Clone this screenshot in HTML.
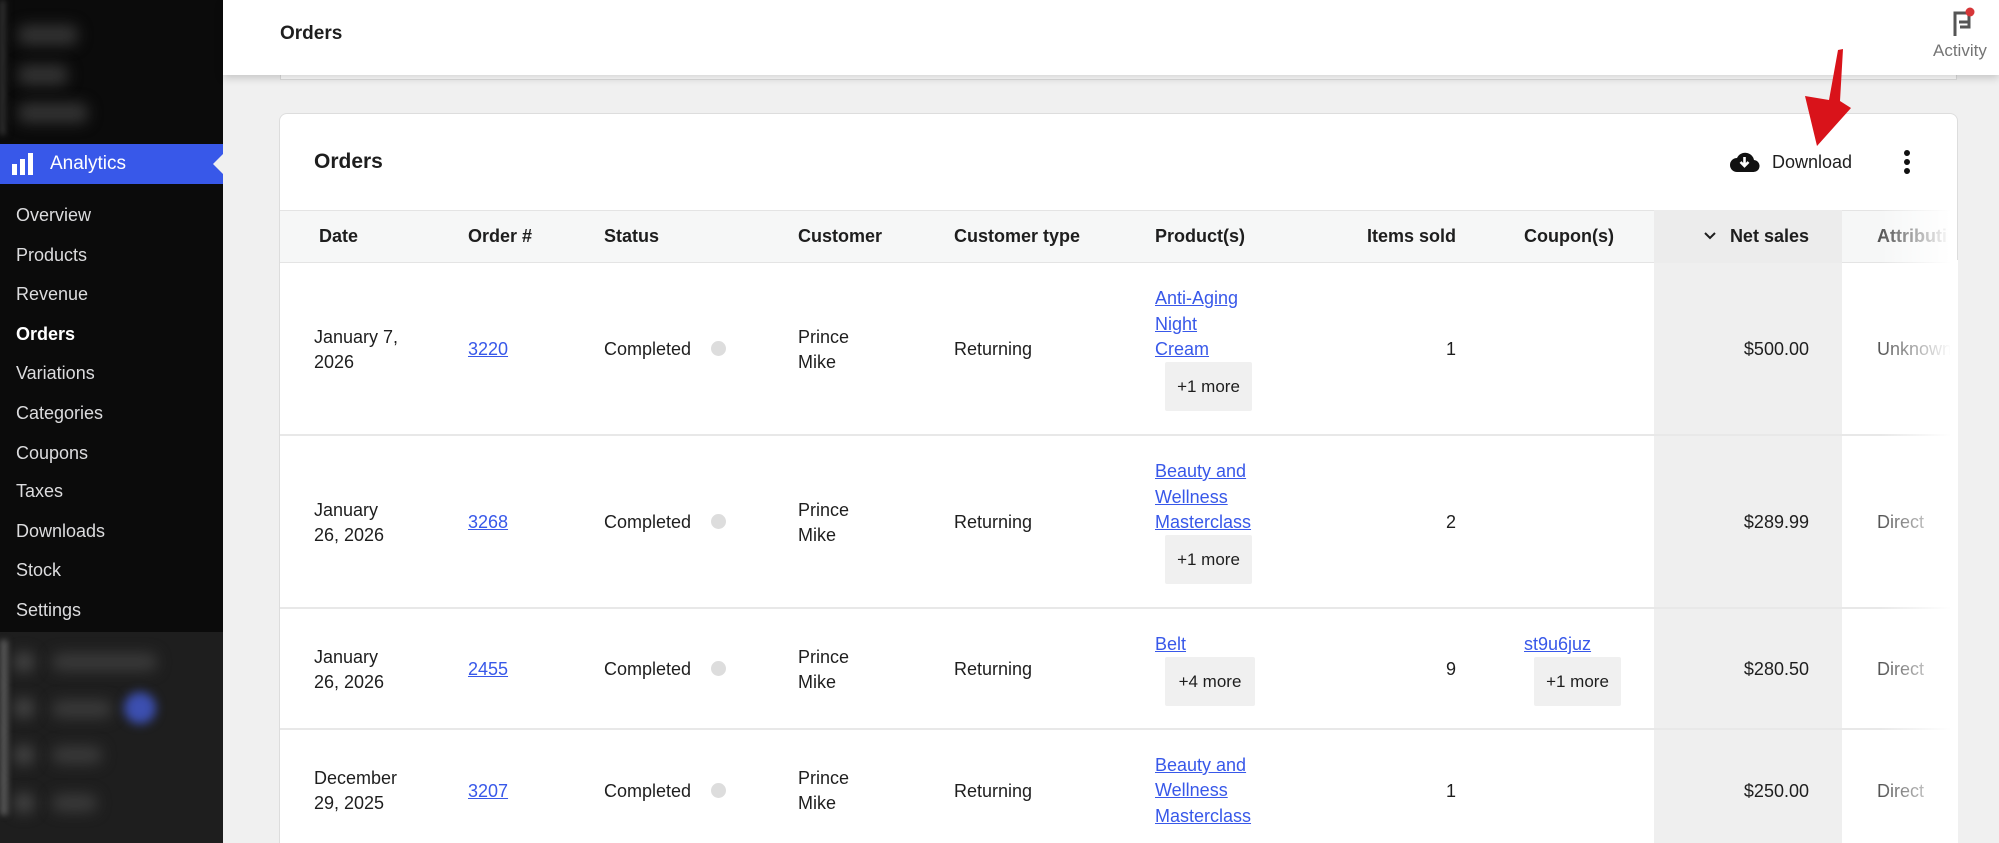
<!DOCTYPE html>
<html style="width:1999px;height:843px;overflow:hidden"><head><meta charset="utf-8"><style>
*{margin:0;padding:0;box-sizing:border-box}
body{width:1999px;height:843px;overflow:hidden;background:#f0f0f0;font-family:"Liberation Sans",Arial,sans-serif;color:#1e1e1e;position:relative}
.a{position:absolute}
.t{position:absolute;line-height:26px;white-space:nowrap;font-size:18px}
.b{font-weight:700}
.l{color:#3858e9;text-decoration:underline}
.btn{position:absolute;background:#f0f0f0;border-radius:2px;font-size:17px;display:flex;align-items:center;justify-content:center}
.dot{position:absolute;width:15px;height:15px;border-radius:50%;background:#ddd}
.sb{position:absolute;left:16px;font-size:18px;color:#dcdcde;line-height:26px}
.blur{position:absolute;background:#555;border-radius:8px;filter:blur(7px)}
.hl{position:absolute;left:280px;width:1677px;height:2px;background:#e8e8e8}
</style></head><body>
<!-- sidebar -->
<div class="a" style="left:0;top:0;width:223px;height:843px;background:#0b0b0b"></div>
<div class="a" style="left:0;top:0;width:8px;height:135px;background:linear-gradient(90deg,#444,#0b0b0b);filter:blur(3px)"></div>
<div class="blur" style="left:18px;top:25px;width:60px;height:20px;background:#333"></div>
<div class="blur" style="left:18px;top:65px;width:50px;height:20px;background:#333"></div>
<div class="blur" style="left:18px;top:103px;width:70px;height:20px;background:#333"></div>
<div class="a" style="left:0;top:144px;width:223px;height:40px;background:#3858e9"></div>
<svg class="a" style="left:12px;top:152px" width="22" height="24" viewBox="0 0 22 24"><rect x="0" y="12" width="5" height="11" fill="#fff"/><rect x="8" y="7" width="5" height="16" fill="#fff"/><rect x="16" y="1" width="5" height="22" fill="#fff"/></svg>
<div class="t" style="left:50px;top:151px;font-size:19px;color:#fff">Analytics</div>
<div class="a" style="left:213px;top:154px;width:0;height:0;border-top:10px solid transparent;border-bottom:10px solid transparent;border-right:10px solid #f0f0f0"></div>
<div class="sb" style="top:202px">Overview</div>
<div class="sb" style="top:242px">Products</div>
<div class="sb" style="top:281px">Revenue</div>
<div class="sb b" style="top:321px;color:#fff">Orders</div>
<div class="sb" style="top:360px">Variations</div>
<div class="sb" style="top:400px">Categories</div>
<div class="sb" style="top:440px">Coupons</div>
<div class="sb" style="top:478px">Taxes</div>
<div class="sb" style="top:518px">Downloads</div>
<div class="sb" style="top:557px">Stock</div>
<div class="sb" style="top:597px">Settings</div>
<div class="a" style="left:0;top:632px;width:223px;height:211px;background:#1e1e1e"></div>
<div class="a" style="left:0;top:640px;width:8px;height:175px;background:#555;filter:blur(3px)"></div>
<div class="blur" style="left:14px;top:652px;width:20px;height:20px;background:#444"></div>
<div class="blur" style="left:52px;top:653px;width:105px;height:18px;background:#3a3a3a"></div>
<div class="blur" style="left:14px;top:698px;width:20px;height:20px;background:#444"></div>
<div class="blur" style="left:52px;top:700px;width:60px;height:18px;background:#3a3a3a"></div>
<div class="a" style="left:124px;top:692px;width:32px;height:32px;border-radius:50%;background:#3c4fb0;filter:blur(5px)"></div>
<div class="blur" style="left:14px;top:745px;width:20px;height:20px;background:#444"></div>
<div class="blur" style="left:52px;top:746px;width:50px;height:18px;background:#3a3a3a"></div>
<div class="blur" style="left:14px;top:793px;width:20px;height:20px;background:#444"></div>
<div class="blur" style="left:52px;top:794px;width:45px;height:18px;background:#3a3a3a"></div>
<!-- header -->
<div class="a" style="left:280px;top:60px;width:1677px;height:20px;border:1px solid #ddd;border-top:none;background:#fff"></div>
<div class="a" style="left:223px;top:0;width:1776px;height:75px;background:#fff;box-shadow:0 3px 8px rgba(0,0,0,.18)"></div>
<div class="t b" style="left:280px;top:21px;font-size:19px">Orders</div>
<svg class="a" style="left:1950px;top:6px" width="26" height="32" viewBox="0 0 26 32"><path d="M5 30V7h14v9H9" fill="none" stroke="#555" stroke-width="3"/><path d="M19 16v5h-9" fill="none" stroke="#555" stroke-width="3"/><circle cx="20" cy="6" r="4.5" fill="#d63638"/></svg>
<div class="t" style="left:1933px;top:38px;font-size:17px;color:#757575">Activity</div>
<!-- card -->
<div class="a" style="left:279px;top:113px;width:1679px;height:730px;background:#fff;border:1px solid #ddd;border-bottom:none;border-radius:8px 8px 0 0;overflow:hidden">
 <div class="a" style="left:0;top:96px;width:1679px;height:53px;background:#f6f7f7;border-top:1px solid #e4e4e4;border-bottom:1px solid #e4e4e4"></div>
 <div class="a" style="left:1374px;top:96px;width:188px;height:640px;background:#efefef"></div>
 <div class="a" style="left:1374px;top:96px;width:188px;height:53px;background:#ececec"></div>
 <div class="a" style="left:1600px;top:96px;width:79px;height:640px;background:linear-gradient(90deg,rgba(255,255,255,0),#fff 90%);z-index:3"></div>
</div>
<div class="t b" style="left:314px;top:149px;font-size:21px">Orders</div>
<svg class="a" style="left:1729px;top:148px" width="31" height="26" viewBox="0 0 31 26"><path d="M8 24h16a6 6 0 0 0 1-12 9 9 0 0 0-17-2 7 7 0 0 0 0 14z" fill="#111"/><path d="M15.5 9v9M11.5 14l4 4 4-4" stroke="#fff" stroke-width="2.6" fill="none"/></svg>
<div class="t" style="left:1772px;top:149px">Download</div>
<div class="a" style="left:1904px;top:150px;width:6px;height:6px;border-radius:50%;background:#111"></div>
<div class="a" style="left:1904px;top:159px;width:6px;height:6px;border-radius:50%;background:#111"></div>
<div class="a" style="left:1904px;top:168px;width:6px;height:6px;border-radius:50%;background:#111"></div>
<svg class="a" style="left:1795px;top:45px;z-index:5" width="70" height="110" viewBox="1795 45 70 110"><path d="M1838 50 L1843 49 L1840 101 L1851 108 L1817 146 L1805 96 L1829 100 Z" fill="#d9131a"/></svg>
<!-- table header -->
<div class="t b" style="left:319px;top:223px">Date</div>
<div class="t b" style="left:468px;top:223px">Order #</div>
<div class="t b" style="left:604px;top:223px">Status</div>
<div class="t b" style="left:798px;top:223px">Customer</div>
<div class="t b" style="left:954px;top:223px">Customer type</div>
<div class="t b" style="left:1155px;top:223px">Product(s)</div>
<div class="t b" style="left:1362px;top:223px;width:94px;text-align:right">Items sold</div>
<div class="t b" style="left:1524px;top:223px">Coupon(s)</div>
<svg class="a" style="left:1703px;top:231px" width="14" height="10" viewBox="0 0 14 10"><path d="M2 2l5 5 5-5" stroke="#1e1e1e" stroke-width="2" fill="none"/></svg>
<div class="t b" style="left:1709px;top:223px;width:100px;text-align:right">Net sales</div>
<div class="t b" style="left:1877px;top:223px;color:#555">Attributi</div>
<!-- row lines -->
<div class="hl" style="top:434px"></div>
<div class="hl" style="top:607px"></div>
<div class="hl" style="top:728px"></div>
<!-- row1 -->
<div class="t" style="left:314px;top:324px">January 7,</div>
<div class="t" style="left:314px;top:349px">2026</div>
<div class="t l" style="left:468px;top:336px">3220</div>
<div class="t" style="left:604px;top:336px">Completed</div><div class="dot" style="left:711px;top:341px"></div>
<div class="t" style="left:798px;top:324px">Prince</div><div class="t" style="left:798px;top:349px">Mike</div>
<div class="t" style="left:954px;top:336px">Returning</div>
<div class="t l" style="left:1155px;top:285px">Anti-Aging</div>
<div class="t l" style="left:1155px;top:311px">Night</div>
<div class="t l" style="left:1155px;top:336px">Cream</div>
<div class="btn" style="left:1165px;top:362px;width:87px;height:49px">+1 more</div>
<div class="t" style="left:1400px;top:336px;width:56px;text-align:right">1</div>
<div class="t" style="left:1700px;top:336px;width:109px;text-align:right">$500.00</div>
<div class="t" style="left:1877px;top:336px;color:#555">Unknown</div>
<!-- row2 -->
<div class="t" style="left:314px;top:497px">January</div>
<div class="t" style="left:314px;top:522px">26, 2026</div>
<div class="t l" style="left:468px;top:509px">3268</div>
<div class="t" style="left:604px;top:509px">Completed</div><div class="dot" style="left:711px;top:514px"></div>
<div class="t" style="left:798px;top:497px">Prince</div><div class="t" style="left:798px;top:522px">Mike</div>
<div class="t" style="left:954px;top:509px">Returning</div>
<div class="t l" style="left:1155px;top:458px">Beauty and</div>
<div class="t l" style="left:1155px;top:484px">Wellness</div>
<div class="t l" style="left:1155px;top:509px">Masterclass</div>
<div class="btn" style="left:1165px;top:535px;width:87px;height:49px">+1 more</div>
<div class="t" style="left:1400px;top:509px;width:56px;text-align:right">2</div>
<div class="t" style="left:1700px;top:509px;width:109px;text-align:right">$289.99</div>
<div class="t" style="left:1877px;top:509px;color:#555">Direct</div>
<div class="a" style="left:1950px;top:260px;width:8px;height:583px;background:#fff;z-index:4"></div>
<!-- row3 -->
<div class="t" style="left:314px;top:644px">January</div>
<div class="t" style="left:314px;top:669px">26, 2026</div>
<div class="t l" style="left:468px;top:656px">2455</div>
<div class="t" style="left:604px;top:656px">Completed</div><div class="dot" style="left:711px;top:661px"></div>
<div class="t" style="left:798px;top:644px">Prince</div><div class="t" style="left:798px;top:669px">Mike</div>
<div class="t" style="left:954px;top:656px">Returning</div>
<div class="t l" style="left:1155px;top:631px">Belt</div>
<div class="btn" style="left:1165px;top:657px;width:90px;height:49px">+4 more</div>
<div class="t" style="left:1400px;top:656px;width:56px;text-align:right">9</div>
<div class="t l" style="left:1524px;top:631px">st9u6juz</div>
<div class="btn" style="left:1534px;top:657px;width:87px;height:49px">+1 more</div>
<div class="t" style="left:1700px;top:656px;width:109px;text-align:right">$280.50</div>
<div class="t" style="left:1877px;top:656px;color:#555">Direct</div>
<!-- row4 -->
<div class="t" style="left:314px;top:765px">December</div>
<div class="t" style="left:314px;top:790px">29, 2025</div>
<div class="t l" style="left:468px;top:778px">3207</div>
<div class="t" style="left:604px;top:778px">Completed</div><div class="dot" style="left:711px;top:783px"></div>
<div class="t" style="left:798px;top:765px">Prince</div><div class="t" style="left:798px;top:790px">Mike</div>
<div class="t" style="left:954px;top:778px">Returning</div>
<div class="t l" style="left:1155px;top:752px">Beauty and</div>
<div class="t l" style="left:1155px;top:777px">Wellness</div>
<div class="t l" style="left:1155px;top:803px">Masterclass</div>
<div class="t" style="left:1400px;top:778px;width:56px;text-align:right">1</div>
<div class="t" style="left:1700px;top:778px;width:109px;text-align:right">$250.00</div>
<div class="t" style="left:1877px;top:778px;color:#555">Direct</div>
</body></html>
